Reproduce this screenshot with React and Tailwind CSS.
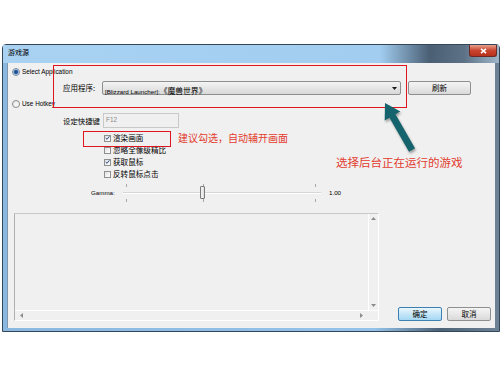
import React from 'react';

const cjk = '"Noto Sans CJK SC", "Liberation Sans", sans-serif';
const latin = '"Liberation Sans", "Noto Sans CJK SC", sans-serif';

const Radio = ({ checked }) => (
  <span className="w-[8px] h-[8px] rounded-full border border-[#8a8a8a] bg-[linear-gradient(135deg,#e6e6e6,#ffffff)] flex items-center justify-center shrink-0">
    {checked && <span className="w-[4px] h-[4px] rounded-full bg-[#2b4f8c] ring-1 ring-[#7fb2e6]" />}
  </span>
);

const Check = ({ checked }) => (
  <span className="w-[7px] h-[7px] border border-[#8e8f8f] bg-[linear-gradient(135deg,#e0e0e0,#ffffff)] flex items-center justify-center shrink-0">
    {checked && (
      <svg width="6" height="6" viewBox="0 0 6 6">
        <path d="M0.8 3 L2.4 4.6 L5.3 0.9" stroke="#1f3f7a" strokeWidth="1.1" fill="none" />
      </svg>
    )}
  </span>
);

const CheckRow = ({ checked, label }) => (
  <div className="h-[12px] flex items-center gap-[2px]">
    <Check checked={checked} />
    <span className="text-[7.6px] leading-none text-black" style={{ fontFamily: cjk }}>{label}</span>
  </div>
);

const Tick = () => <span className="block w-px h-[3px] bg-[#a8a8a8]" />;

export default function App() {
  return (
    <div className="relative w-[503px] h-[378px] bg-white pt-[44px] pl-[2px] overflow-hidden">
      {/* window */}
      <div className="w-[498px] h-[288px] flex flex-col border border-[#33465a] rounded-t-[4px] bg-[linear-gradient(to_right,#8ab8e0_0%,#94c2e8_75%,#4d6378_88%,#6d8297_100%)]">
        {/* title bar */}
        <div className="h-[18px] flex items-start justify-between bg-[linear-gradient(to_right,#a9d2f2_0%,#a2cdf0_76%,#4a5f74_86%,#5d7286_93%,#9fb6ca_100%)]">
          <span className="ml-[5px] mt-[4px] text-[7px] leading-none text-black" style={{ fontFamily: cjk }}>游戏源</span>
          <div className="mr-[2px] w-[28px] h-[12px] rounded-b-[3px] border border-[#6b2a23] border-t-0 bg-[linear-gradient(to_bottom,#e9a08c,#c8452f_50%,#b8301c)] flex items-center justify-center">
            <svg width="7" height="6" viewBox="0 0 7 6">
              <path d="M1 0.8 L6 5.2 M6 0.8 L1 5.2" stroke="#ffffff" strokeWidth="1.6" />
            </svg>
          </div>
        </div>

        {/* client */}
        <div className="flex-1 mx-[4px] mb-[3px] bg-[#f0f0f0] border-l border-[#7e96ad] flex flex-col">
          <div className="mt-[3px] h-[12px] pl-[4px] flex items-center gap-[2px]">
            <Radio checked />
            <span className="text-[6.4px] leading-none text-black" style={{ fontFamily: latin }}>Select Application</span>
          </div>

          <div className="mt-[3px] h-[14px] pl-[55px] flex items-center">
            <span className="w-[39px] text-[7.5px] leading-none text-black" style={{ fontFamily: cjk }}>应用程序:</span>
            <div className="w-[299px] h-[14px] rounded-[2px] border border-[#8e8f8f] bg-[linear-gradient(to_bottom,#f4f4f4,#e6e6e6_50%,#d8d8d8)] flex items-center justify-between px-[2px]">
              <span className="leading-none text-black whitespace-nowrap">
                <span className="text-[6.2px]" style={{ fontFamily: latin }}>[Blizzard Launcher]:</span>
                <span className="text-[7.8px]" style={{ fontFamily: cjk }}>《魔兽世界》</span>
              </span>
              <svg width="5" height="3" viewBox="0 0 5 3" className="mr-[1px]">
                <path d="M0 0 H5 L2.5 3 Z" fill="#1a1a1a" />
              </svg>
            </div>
            <div className="ml-[7px] w-[63px] h-[14px] rounded-[2px] border border-[#8e8f8f] bg-[linear-gradient(to_bottom,#f4f4f4,#e8e8e8_50%,#d9d9d9)] flex items-center justify-center">
              <span className="text-[7.5px] leading-none text-black" style={{ fontFamily: cjk }}>刷新</span>
            </div>
          </div>

          <div className="mt-[3px] h-[12px] pl-[4px] flex items-center gap-[2px]">
            <Radio />
            <span className="text-[6.4px] leading-none text-black" style={{ fontFamily: latin }}>Use Hotkey</span>
          </div>

          <div className="mt-[3px] h-[15px] pl-[55px] flex items-center">
            <span className="w-[40px] text-[7.4px] leading-none text-black" style={{ fontFamily: cjk }}>设定快捷键</span>
            <div className="w-[76px] h-[15px] border border-[#c9c9c9] bg-[#f0f0f0] flex items-center px-[2px]">
              <span className="text-[6.4px] leading-none text-[#8a8a8a]" style={{ fontFamily: latin }}>F12</span>
            </div>
          </div>

          <div className="mt-[4px] pl-[96px] flex flex-col">
            <CheckRow checked label="渲染画面" />
            <CheckRow label="忽略全像级精比" />
            <CheckRow checked label="获取鼠标" />
            <CheckRow label="反转鼠标点击" />
          </div>

          <div className="mt-[4px] h-[18px] pl-[83px] flex items-center">
            <span className="w-[32px] text-[6.2px] leading-none text-black" style={{ fontFamily: latin }}>Gamma:</span>
            <div className="relative w-[198px] h-[18px] flex items-center">
              <div className="w-full h-[2px] bg-[#d6d6d6] border-b border-[#ffffff]" />
              <div className="absolute left-[3px] top-0"><Tick /></div>
              <div className="absolute left-[3px] bottom-0"><Tick /></div>
              <div className="absolute left-[80px] top-0"><Tick /></div>
              <div className="absolute left-[80px] bottom-0"><Tick /></div>
              <div className="absolute left-[192px] top-0"><Tick /></div>
              <div className="absolute left-[192px] bottom-0"><Tick /></div>
              <div className="absolute left-[77px] top-[2px] w-[5px] h-[13px] rounded-[1px] border border-[#7a7a7a] bg-[linear-gradient(to_right,#f6f6f6,#dedede)]" />
            </div>
            <span className="ml-[8px] text-[6.2px] leading-none text-black" style={{ fontFamily: latin }}>1.00</span>
          </div>

          <div className="mt-[11px] flex items-end">
            <div className="ml-[6px] w-[365px] h-[108px] border border-t-[#c8c8c8] border-l-[#b0b0b0] border-r-[#ffffff] border-b-[#ffffff] flex flex-col">
              <div className="flex-1 flex">
                <div className="flex-1" />
                <div className="w-[10px] border-l border-[#ffffff] flex flex-col items-center justify-between py-[3px]">
                  <svg width="5" height="3" viewBox="0 0 5 3"><path d="M0 3 H5 L2.5 0 Z" fill="#8c8c8c" /></svg>
                  <svg width="5" height="3" viewBox="0 0 5 3"><path d="M0 0 H5 L2.5 3 Z" fill="#8c8c8c" /></svg>
                </div>
              </div>
              <div className="h-[10px] flex border-t border-[#ffffff]">
                <div className="flex-1 flex items-center justify-between px-[5px]">
                  <svg width="3" height="5" viewBox="0 0 3 5"><path d="M3 0 V5 L0 2.5 Z" fill="#8c8c8c" /></svg>
                  <svg width="3" height="5" viewBox="0 0 3 5"><path d="M0 0 V5 L3 2.5 Z" fill="#8c8c8c" /></svg>
                </div>
                <div className="w-[10px]" />
              </div>
            </div>
            <div className="ml-[19px] w-[44px] h-[14px] rounded-[2px] border border-[#3c7fb1] bg-[linear-gradient(to_bottom,#eaf6fd,#c5e6f8_50%,#a6d8f4)] flex items-center justify-center">
              <span className="text-[7.5px] leading-none text-black" style={{ fontFamily: cjk }}>确定</span>
            </div>
            <div className="ml-[5px] w-[44px] h-[14px] rounded-[2px] border border-[#8e8f8f] bg-[linear-gradient(to_bottom,#f4f4f4,#e8e8e8_50%,#d9d9d9)] flex items-center justify-center">
              <span className="text-[7.5px] leading-none text-black" style={{ fontFamily: cjk }}>取消</span>
            </div>
          </div>
        </div>
      </div>

      {/* annotations */}
      <div className="absolute left-[53px] top-[65px] w-[354px] h-[43px] border-[1.5px] border-[#e0141e]" />
      <div className="absolute left-[83px] top-[131px] w-[88px] h-[16px] border-[1.5px] border-[#e0141e]" />
      <span className="absolute left-[178px] top-[133px] text-[10px] leading-none text-[#e23b2e] whitespace-nowrap" style={{ fontFamily: cjk }}>建议勾选，自动辅开画面</span>
      <span className="absolute left-[336px] top-[157px] text-[11.5px] leading-none text-[#e23b2e] whitespace-nowrap" style={{ fontFamily: cjk }}>选择后台正在运行的游戏</span>
      <svg className="absolute left-0 top-0 drop-shadow-[1px_2px_1px_rgba(0,0,0,0.35)]" width="503" height="378" viewBox="0 0 503 378">
        <polygon points="385,103 400.3,111.5 395.5,114.3 415,148.3 409,151.7 389.5,117.7 384.7,120.5" fill="#14636d" />
      </svg>
    </div>
  );
}
